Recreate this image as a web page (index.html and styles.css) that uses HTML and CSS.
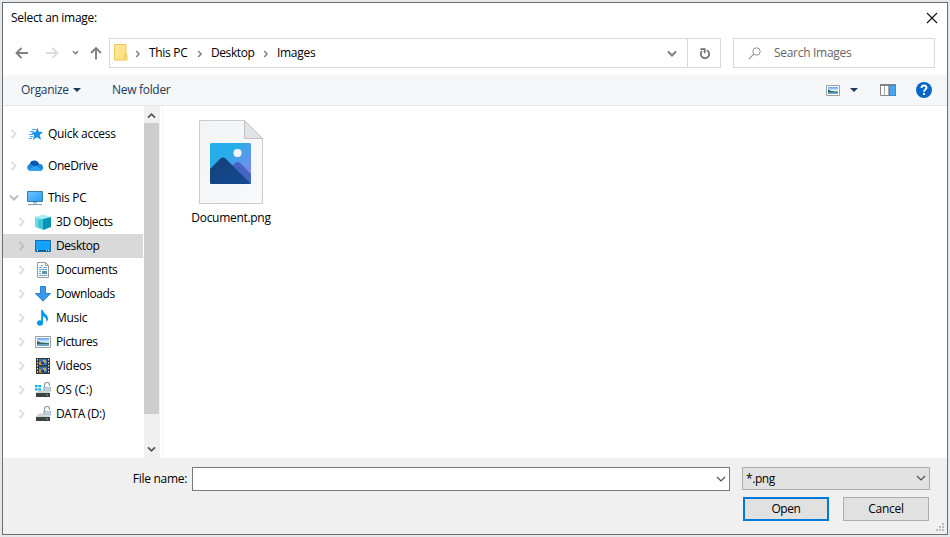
FILE: index.html
```html
<!DOCTYPE html>
<html lang="en">
<head>
<meta charset="utf-8">
<title>Select an image</title>
<link rel="stylesheet" href="styles.css">
</head>
<body>
<svg class="defs" width="0" height="0">
  <defs>
    <linearGradient id="sky" x1="0" y1="0" x2="1" y2="1"><stop offset=".35" stop-color="#27aeea"/><stop offset="1" stop-color="#a07be8"/></linearGradient>
    <linearGradient id="hill" x1="0" y1="0" x2="1" y2="1"><stop offset="0" stop-color="#174078"/><stop offset="1" stop-color="#124a94"/></linearGradient>
    <linearGradient id="screen" x1="0" y1="0" x2="1" y2="1"><stop offset="0" stop-color="#6cc5ff"/><stop offset="1" stop-color="#2a9df4"/></linearGradient>
    <linearGradient id="photo" x1="0" y1="0" x2="0" y2="1"><stop offset="0" stop-color="#5b9df0"/><stop offset=".5" stop-color="#e4f3fc"/><stop offset=".7" stop-color="#9cc6e0"/><stop offset="1" stop-color="#5e9ad0"/></linearGradient>
    <linearGradient id="paper" x1="0" y1="0" x2="1" y2="1"><stop offset="0" stop-color="#f3f4f5"/><stop offset="1" stop-color="#f8f9fa"/></linearGradient>
    <linearGradient id="folder" x1="0" y1="0" x2="1" y2="1"><stop offset="0" stop-color="#ffe9a0"/><stop offset="1" stop-color="#ffdc76"/></linearGradient>
  </defs>
  <symbol id="chev" viewBox="0 0 8 10"><path d="M1.500 1l4 4-4 4" fill="none" stroke="currentColor" stroke-width="2"/></symbol>
  <symbol id="down" viewBox="0 0 10 8"><path d="M1 1.500l4 4 4-4" fill="none" stroke="currentColor" stroke-width="2"/></symbol>
  <symbol id="drive" viewBox="0 0 16 16"><path d="M9.600 6V2.800a2.200 2.200 0 0 1 4.800 0V4" fill="none" stroke="#8ca3b0" stroke-width="1.200"/><path d="M8 5h8v4.500H8z" fill="#a9bfcc"/><path d="M10 6.500h5M10 8h5" stroke="#dbe6ec" stroke-width=".7"/><path d="M3.500 7.500H9v2h5L15 11H1z" fill="#d0d3d5"/><path d="M1 11h14v4H1z" fill="#3d4245"/><path d="M11 12.500h2v1h-2z" fill="#30e060"/></symbol>
</svg>
<div class="window">
  <header class="title"><span>Select an image:</span>
    <svg width="12" height="12" viewBox="0 0 12 12"><path d="M1 1l10 10M11 1L1 11" stroke="#111" stroke-width="1.100"/></svg>
  </header>
  <div class="nav">
    <div class="arrows">
      <svg width="14" height="12" viewBox="0 0 14 12"><path d="M13 6H2M6.500 1L1.500 6l5 5" fill="none" stroke="#808080" stroke-width="1.800"/></svg>
      <svg width="14" height="12" viewBox="0 0 14 12"><path d="M1 6h11M7.500 1l5 5-5 5" fill="none" stroke="#dcdcdc" stroke-width="1.800"/></svg>
      <svg width="7" height="6" viewBox="0 0 7 6"><path d="M1 1.200l2.500 2.500L6 1.200" fill="none" stroke="#808080" stroke-width="1.600"/></svg>
      <svg width="12" height="14" viewBox="0 0 12 14"><path d="M6 13.500V2M1 7l5-5 5 5" fill="none" stroke="#808080" stroke-width="1.900"/></svg>
    </div>
    <div class="address">
      <svg width="14" height="17" viewBox="0 0 14 17"><path d="M.5.5h11.500v10H13v5.500H.5z" fill="url(#folder)" stroke="#eec85b"/><path d="M10.500 15.500v-5H13" fill="none" stroke="#eec85b"/></svg>
      <svg class="sep s1" width="6" height="8"><use href="#chev"/></svg><span class="crumb c1">This PC</span>
      <svg class="sep" width="6" height="8"><use href="#chev"/></svg><span class="crumb c2">Desktop</span>
      <svg class="sep" width="6" height="8"><use href="#chev"/></svg><span class="crumb">Images</span>
      <svg class="expand" width="10" height="8"><use href="#down"/></svg>
      <div class="refresh"><svg width="12" height="13" viewBox="0 0 12 13"><path d="M7.800 3.200A4.200 4.200 0 1 1 3 4M1.500 2.200h4.200v4" fill="none" stroke="#717171" stroke-width="1.700"/></svg></div>
    </div>
    <div class="search"><svg width="14" height="13" viewBox="0 0 14 13"><circle cx="8.500" cy="4.500" r="3.700" fill="none" stroke="#918d96"/><path d="M5.800 7.200L.8 12.200" stroke="#918d96" stroke-width="1.100"/></svg><span>Search Images</span></div>
  </div>
  <div class="toolbar">
    <span class="organize">Organize</span><i class="tri"></i><span class="new">New folder</span>
    <div class="tools">
      <svg width="14" height="11" viewBox="0 0 14 11"><path d="M.5.5h13v10H.5z" fill="#fff" stroke="#9a9fa4"/><path d="M2 2h10v7H2z" fill="url(#photo)"/><path d="M2 4.500l3 1.500 7 .7v.8H2z" fill="#2d6258"/></svg>
      <i class="tri"></i>
      <svg class="pane" width="16" height="12" viewBox="0 0 16 12"><path d="M.5.5h15v11H.5z" fill="#fff" stroke="#858585"/><path d="M0 0h16v2H0z" fill="#858585"/><path d="M4.500 2v9M8.500 2v9" stroke="#aaa"/><path d="M9 1h7v11H9z" fill="#2f91dc"/><path d="M10 2h5v9h-5z" fill="#49a6ed"/></svg>
      <svg class="help" width="16" height="16" viewBox="0 0 16 16"><circle cx="8" cy="8" r="8" fill="#0567c8"/><path d="M5.500 6C5.500 2.800 10.500 2.800 10.500 5.700 10.500 7.500 8 7.700 8 9.700M8 11v2" fill="none" stroke="#fff" stroke-width="1.900"/></svg>
    </div>
  </div>
  <main>
    <nav class="tree">
      <div class="row root"><svg class="arr" width="8" height="10"><use href="#chev"/></svg><svg class="ico star" width="16" height="16" viewBox="0 0 16 16"><path d="M9.500 1.500l1.300 4.300 4.200.1-3.300 3 1.400 4.800L9 11.200 4.800 14l1.500-4.800L3 6.500l4.500-.5z" fill="#1594e4"/><path d="M4 3.500h4M2 5.500h4M1 8.500h4M2 10.500h3M1 12.500h3" stroke="#4aa9e8"/></svg><span>Quick access</span></div>
      <div class="row root gap"><svg class="arr" width="8" height="10"><use href="#chev"/></svg><svg class="ico" width="16" height="16" viewBox="0 0 16 16"><path d="M3.500 13a3.600 3.600 0 0 1-.8-7A4.800 4.800 0 0 1 12 6a3.500 3.500 0 0 1 1 7z" fill="#1687d9"/><path d="M2.800 6A4.800 4.800 0 0 1 12 6.200L8.500 9 5 6.500z" fill="#0c54ad"/><path d="M1 12l7.500-4.500L15 12l-2 1H3.500z" fill="#31a2ef"/></svg><span class="snug">OneDrive</span></div>
      <div class="row root gap"><svg class="arr open" width="10" height="8"><use href="#down"/></svg><svg class="ico" width="16" height="16" viewBox="0 0 16 16"><path d="M.5 1.500h15v10H.5z" fill="url(#screen)" stroke="#3b7fa9"/><path d="M6 12h4v1.500H6z" fill="#9bb6c6"/><path d="M1 14.500h14" stroke="#7c9aae"/></svg><span>This PC</span></div>
      <div class="row"><svg class="arr" width="8" height="10"><use href="#chev"/></svg><svg class="ico" width="16" height="16" viewBox="0 0 16 16"><path d="M0 3l8-2.500L16 3 8 5z" fill="#a6edf5"/><path d="M0 3l8 2v11l-8-3z" fill="#6bdce6"/><path d="M16 3L8 5v11l8-3z" fill="#0894b6"/><path d="M3 6l5-1v10l-5-2z" fill="#28b4ca" opacity=".6"/></svg><span class="snug">3D Objects</span></div>
      <div class="row selected"><svg class="arr" width="8" height="10"><use href="#chev"/></svg><svg class="ico" width="16" height="16" viewBox="0 0 16 16"><path d="M.5 2.500h15v11H.5z" fill="#16a1ff" stroke="#126fae"/><path d="M1 12.500h14" stroke="#0b598f"/><path d="M2 12.500h1M11 12.500h1M13 12.500h1" stroke="#fff"/></svg><span class="snug">Desktop</span></div>
      <div class="row"><svg class="arr" width="8" height="10"><use href="#chev"/></svg><svg class="ico" width="16" height="16" viewBox="0 0 16 16"><path d="M2.500.5h8l3 3v12h-11z" fill="#fff" stroke="#9a9a9a"/><path d="M10.500.5v3h3" fill="none" stroke="#9a9a9a"/><path d="M6 3.500h2M4 5.500h3M8 5.500h4M4 7.500h8M4 9.500h2M4 11.500h2M4 13.500h8" stroke="#68a9d4"/><path d="M7 9h5v3H7z" fill="#5b94a8"/></svg><span>Documents</span></div>
      <div class="row"><svg class="arr" width="8" height="10"><use href="#chev"/></svg><svg class="ico" width="16" height="16" viewBox="0 0 16 16"><path d="M5.500.5h5v7h5L8 15.200.5 7.500h5z" fill="#3c98e8" stroke="#2681cf"/></svg><span class="snug">Downloads</span></div>
      <div class="row"><svg class="arr" width="8" height="10"><use href="#chev"/></svg><svg class="ico" width="16" height="16" viewBox="0 0 16 16"><ellipse cx="5" cy="13" rx="3" ry="2.700" fill="#0796ed"/><path d="M6.200 0H8c.2 3.500 5 4.500 5 8.500 0 1.500-.6 2.500-1.500 3.500.3-3.500-1.500-5-3.500-5.800V13H6.200z" fill="#0796ed"/></svg><span>Music</span></div>
      <div class="row"><svg class="arr" width="8" height="10"><use href="#chev"/></svg><svg class="ico" width="16" height="16" viewBox="0 0 16 16"><path d="M.5 2.500h15v11H.5z" fill="#fff" stroke="#9a9fa4"/><path d="M2 4h12v8H2z" fill="url(#photo)"/><path d="M2 7l4 1.500 8 .8v1H2z" fill="#2d625e"/></svg><span class="snug">Pictures</span></div>
      <div class="row"><svg class="arr" width="8" height="10"><use href="#chev"/></svg><svg class="ico" width="16" height="16" viewBox="0 0 16 16"><path d="M1 0h14v16H1z" fill="#343434"/><path d="M2.500 1v14M13.500 1v14" stroke="#ddd" stroke-dasharray="1.500 1.500"/><path d="M4 1h8v6H4zM4 8.500h8v6H4z" fill="#3573b6"/><path d="M4 4h3v3H4zM8 2h3v3H8zM4 11.500h3v3H4zM8 10h3v3H8z" fill="#cba43b"/><path d="M6 4h3v2H6zM6 12h3v2H6z" fill="#193f73"/></svg><span>Videos</span></div>
      <div class="row"><svg class="arr" width="8" height="10"><use href="#chev"/></svg><svg class="ico" width="16" height="16" viewBox="0 0 16 16"><use href="#drive"/><path d="M0 2h7v7H0z" fill="#fff"/><path d="M0 3h2.500v2.300H0zM3.300 3H6v2.300H3.300zM0 6.200h2.500v2.300H0zM3.300 6.200H6v2.300H3.300z" fill="#09aeed"/></svg><span class="wide">OS (C:)</span></div>
      <div class="row"><svg class="arr" width="8" height="10"><use href="#chev"/></svg><svg class="ico" width="16" height="16"><use href="#drive"/></svg><span class="snug">DATA (D:)</span></div>
    </nav>
    <div class="scroll"><svg class="up" width="9" height="7"><use href="#down"/></svg><div class="thumb"></div><svg width="9" height="7"><use href="#down"/></svg></div>
    <section class="files">
      <div class="file">
        <svg width="64" height="84" viewBox="0 0 64 84"><path d="M.5.5h45l18 18v65H.5z" fill="url(#paper)" stroke="#c9cbcc"/><path d="M45.500.5v18h18z" fill="#e2e3e4" stroke="#c0c2c3"/><rect x="11" y="23" width="41" height="41" rx="1.500" fill="url(#sky)"/><path d="M32 47l4-4q2.500-2 5 0l11 11v8.500q0 1.500-1.500 1.500H40z" fill="#4565c5"/><path d="M11 49l10.500-10.500q2.500-2 5 0L51.500 63.500l-1 .5h-38q-1.500 0-1.500-1.500z" fill="url(#hill)"/><circle cx="38.500" cy="33" r="4" fill="#f4f6f7"/></svg>
        <span class="filename">Document.png</span>
      </div>
    </section>
  </main>
  <footer>
    <div class="line"><label>File name:</label>
      <div class="input"><svg width="10" height="7" viewBox="0 0 10 7"><path d="M1 1l4 4 4-4" fill="none" stroke="#505050" stroke-width="1.200"/></svg></div>
      <div class="select"><span class="snug">*.png</span><svg width="10" height="7" viewBox="0 0 10 7"><path d="M1 1l4 4 4-4" fill="none" stroke="#505050" stroke-width="1.200"/></svg></div>
    </div>
    <div class="buttons"><button class="primary"><span class="snug">Open</span></button><button><span>Cancel</span></button></div>
    <svg class="grip" width="9" height="9" viewBox="0 0 9 9"><path d="M6 0h2v2H6zM3 3h2v2H3zM6 3h2v2H6zM0 6h2v2H0zM3 6h2v2H3zM6 6h2v2H6z" fill="#bdbdbd"/></svg>
  </footer>
</div>
</body>
</html>
```
FILE: styles.css
```css
* { box-sizing: border-box; }
body { margin: 0; padding: 2px; background: #e4e8eb; font: 12px/16px "Open Sans", "Noto Sans", sans-serif; color: #000; height: 537px; overflow: hidden; }
svg { display: block; flex: none; }
.defs { position: absolute; }
span, label { white-space: nowrap; letter-spacing: -0.3px; }
.snug { letter-spacing: -0.42px; }
.wide { letter-spacing: -0.1px; }
.window { width: 946px; height: 533px; border: 1px solid #6b6f72; background: #fff; display: flex; flex-direction: column; }
.title { height: 35px; padding: 0 9px 6px 8px; display: flex; align-items: center; justify-content: space-between; }
.nav { height: 37px; display: flex; align-items: flex-start; }
.arrows { width: 106px; height: 30px; padding-left: 12px; display: flex; align-items: center; gap: 16px; }
.arrows svg:nth-child(3) { margin-left: -3px; }
.arrows svg:nth-child(4) { margin-left: -5px; }
.address { width: 612px; height: 30px; border: 1px solid #d9d9d9; display: flex; align-items: center; padding-left: 4px; }
.address > svg:first-child { margin-top: -2px; }
.sep, .expand { color: #808080; }
.sep { margin: 1px 0 0 9px; }
.sep.s1 { margin-left: 7px; }
.crumb { margin-left: 8px; }
.c1 { width: 39px; }
.c2 { width: 43px; letter-spacing: -0.42px; }
.expand { margin-left: auto; margin-top: 2px; }
.refresh { width: 33px; height: 28px; margin-left: 10px; border-left: 1px solid #d9d9d9; display: flex; align-items: center; justify-content: center; padding: 1px 0 0 1px; }
.search { width: 202px; height: 30px; margin-left: 12px; border: 1px solid #d9d9d9; display: flex; align-items: center; gap: 12px; padding-left: 14px; color: #666; }
.toolbar { height: 31px; background: #f4f6f8; border-bottom: 1px solid #e5e7e9; display: flex; align-items: center; padding: 0 15px 0 18px; color: #1e395b; }
.organize { width: 47px; }
.new { margin-left: 31px; }
.tri { border: 4px solid transparent; border-top: 4px solid #1e395b; border-bottom: 0; margin-left: 5px; width: 8px; height: 4px; }
.tools { margin-left: auto; display: flex; align-items: center; }
.tools .tri { margin-left: 10px; }
.pane { margin-left: 22px; }
.help { margin-left: 20px; }
main { height: 352px; display: flex; }
.tree { width: 141px; padding-top: 16px; }
.row { height: 24px; width: 140px; display: flex; align-items: center; padding-left: 15px; }
.row.root { padding-left: 7px; }
.row.gap { margin-top: 8px; }
.arr { color: #dedede; width: 8px; }
.arr.open { width: 10px; color: #bdbdbd; margin-left: -1px; margin-right: -1px; }
.ico { margin: 0 5px 0 9px; }
.star { margin: 0 4px 0 10px; }
.selected { background: #d9d9d9; }
.selected .arr { color: #c0c0c0; }
.scroll { width: 16px; background: #f0f0f0; display: flex; flex-direction: column; align-items: center; padding: 6px 1px 5px 0; color: #555; }
.up { transform: rotate(180deg); }
.thumb { width: 15px; height: 291px; margin: 4px 0 32px; background: #cdcdcd; }
.files { flex: 1; margin-left: 2px; border-left: 1px solid #f5f5f5; padding: 14px 0 0 22px; }
.file { width: 91px; display: flex; flex-direction: column; align-items: center; gap: 6px; }
.filename { padding-left: 1px; }
footer { height: 76px; background: #f0f0f0; padding-top: 9px; position: relative; }
.line { display: flex; height: 24px; align-items: flex-start; }
.line label { width: 189px; padding: 4px 5px 0 0; text-align: right; }
.input { width: 538px; height: 24px; background: #fff; border: 1px solid #7a7a7a; display: flex; align-items: center; justify-content: flex-end; padding-right: 3px; }
.select { width: 188px; height: 23px; margin-left: 12px; background: #e1e1e1; border: 1px solid #adadad; display: flex; align-items: center; justify-content: space-between; padding: 0 3px; }
.buttons { display: flex; gap: 14px; margin: 6px 0 0 740px; }
button { width: 86px; height: 24px; padding: 0; border: 1px solid #adadad; background: #e1e1e1; font: inherit; color: #000; }
.primary { border: 2px solid #0078d7; }
.grip { position: absolute; right: 2px; bottom: 2px; }
```
